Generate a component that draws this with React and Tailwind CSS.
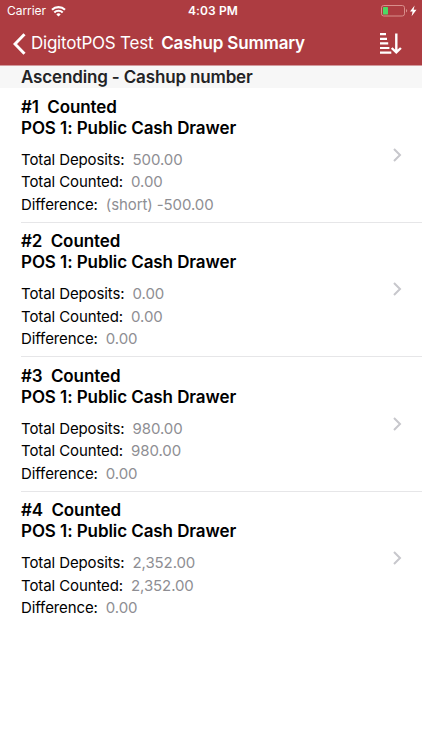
const cashups = [
  { number: 1, status: "Counted", drawer: "POS 1: Public Cash Drawer", deposits: "500.00", counted: "0.00", difference: "(short) -500.00" },
  { number: 2, status: "Counted", drawer: "POS 1: Public Cash Drawer", deposits: "0.00", counted: "0.00", difference: "0.00" },
  { number: 3, status: "Counted", drawer: "POS 1: Public Cash Drawer", deposits: "980.00", counted: "980.00", difference: "0.00" },
  { number: 4, status: "Counted", drawer: "POS 1: Public Cash Drawer", deposits: "2,352.00", counted: "2,352.00", difference: "0.00" },
];

const WifiIcon = () => (
  <svg width="15" height="11" viewBox="0 0 15 11" fill="none" stroke="white" strokeWidth="2.1">
    <path d="M1 3.8a9.2 9.2 0 0 1 13 0" />
    <path d="M3.3 6.5a5.9 5.9 0 0 1 8.4 0" />
    <path d="M7.5 10.6 5.3 8.4a3.1 3.1 0 0 1 4.4 0z" fill="white" stroke="none" />
  </svg>
);

const BatteryIcon = () => (
  <svg width="36" height="12" viewBox="0 0 36 12" fill="none">
    <rect x="0.5" y="0.5" width="23" height="10.5" rx="2.2" stroke="#d98f8c" />
    <rect x="2" y="2" width="5" height="7.5" rx="0.5" fill="#4cd964" />
    <path d="M25 4v3.5c1.6-.6 1.6-2.9 0-3.5z" fill="#d98f8c" />
    <path d="M33.6.5 29 6.5h2.6l-1 4.7 4.9-6.4h-2.9z" fill="white" />
  </svg>
);

const SortIcon = () => (
  <svg width="22" height="22" viewBox="0 0 22 22" fill="none" stroke="white" strokeWidth="2.2">
    <path d="M0 1.2h6M0 5.8h7M0 10.4h8.2M0 15h9.4M0 19.6h11.3" />
    <path d="M16.3.5v19M11.7 15l4.6 4.4 4.6-4.4" strokeWidth="2.4" />
  </svg>
);

const Detail = ({ label, value }) => (
  <div className="flex h-[22.4px] items-center gap-[8px]">
    <span className="text-black">{label}</span>
    <span className="text-[#8e8e93]">{value}</span>
  </div>
);

const CashupRow = ({ cashup, last }) => (
  <li className="pl-[21px]">
    <div className={`flex h-[134.4px] items-center justify-between border-b pr-[20px] ${last ? "border-transparent" : "border-[#e6e6e8]"}`}>
      <div className="pt-[3px]">
        <h2 className="text-[17px] leading-[21px] font-semibold tracking-[-0.1px] whitespace-pre text-black">
          {`#${cashup.number}  ${cashup.status}`}
        </h2>
        <h3 className="text-[17px] leading-[21px] font-semibold tracking-[-0.08px] text-black">{cashup.drawer}</h3>
        <div className="mt-[10px] text-[15px] tracking-[-0.1px]">
          <Detail label="Total Deposits:" value={cashup.deposits} />
          <Detail label="Total Counted:" value={cashup.counted} />
          <Detail label="Difference:" value={cashup.difference} />
        </div>
      </div>
      <svg width="9" height="14" viewBox="0 0 9 14" fill="none" stroke="#c7c7cc" strokeWidth="2">
        <path d="m1 1 6 6-6 6" />
      </svg>
    </div>
  </li>
);

export default function App() {
  return (
    <div className="h-[750px] w-[422px] overflow-hidden bg-white font-[Inter,sans-serif]">
      <header className="h-[66px] border-b border-[#d29a9d] bg-[#ad3c41] text-white">
        <div className="grid h-[22px] grid-cols-3 items-center pr-[5px] pl-[7px] text-[12px]">
          <div className="flex items-center gap-[5px]">
            <span className="tracking-[-0.05px]">Carrier</span>
            <WifiIcon />
          </div>
          <span className="pl-[2px] text-center font-semibold tracking-[0.1px]">4:03 PM</span>
          <div className="flex justify-end">
            <BatteryIcon />
          </div>
        </div>
        <div className="flex h-[43px] items-center pr-[20px] pl-[13px]">
          <svg width="13" height="22" viewBox="0 0 13 22" fill="none" stroke="white" strokeWidth="3">
            <path d="M11.5 1.2 2 11l9.5 9.8" />
          </svg>
          <span className="ml-[5px] text-[17px] tracking-[-0.23px]">DigitotPOS Test</span>
          <h1 className="ml-[8px] text-[17px] font-semibold tracking-[-0.18px]">Cashup Summary</h1>
          <div className="ml-auto">
            <SortIcon />
          </div>
        </div>
      </header>
      <div className="flex h-[22.4px] items-center bg-[#f7f7f7] pt-[2px] pl-[21px] text-[17px] font-semibold tracking-[-0.15px] text-[#232325]">
        Ascending - Cashup number
      </div>
      <ul>
        {cashups.map((cashup, i) => (
          <CashupRow key={cashup.number} cashup={cashup} last={i === cashups.length - 1} />
        ))}
      </ul>
    </div>
  );
}
